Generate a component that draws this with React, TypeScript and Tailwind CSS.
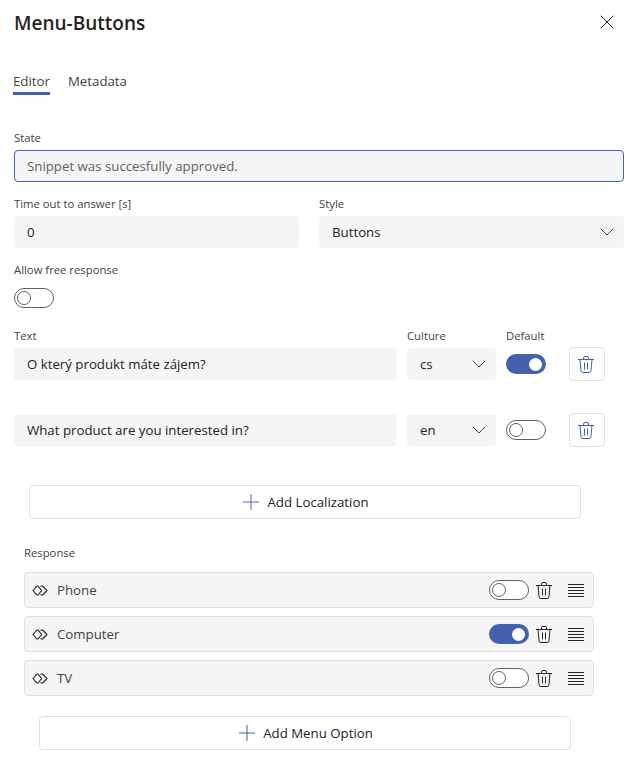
import { ChevronDown, Plus, X } from "lucide-react"

const font = "font-['Open_Sans','Noto_Sans',sans-serif]"

function TrashIcon({ className }: { className: string }) {
  return (
    <svg viewBox="0 0 16 17" fill="none" stroke="currentColor" strokeWidth="1" className={className}>
      <path d="M0 3.5h16" />
      <path d="M5.5 3.5V2a1.5 1.5 0 0 1 1.5-1.5h2A1.5 1.5 0 0 1 10.5 2v1.5" />
      <path d="M2 3.5l1 11a2 2 0 0 0 2 2h6a2 2 0 0 0 2-2l1-11" />
      <path d="M6.5 6.5v7M9.5 6.5v7" />
    </svg>
  )
}

function LinkIcon() {
  return (
    <svg viewBox="0 0 16 11" fill="none" stroke="#242424" strokeWidth="1.1" strokeLinejoin="round" className="h-[11px] w-4">
      <path d="M4.8 1.2 1 5.5l3.800 4.300a.8.8 0 0 0 1.200 0l3.800-4.300L6 1.200a.8.8 0 0 0-1.200 0Z" />
      <path d="M8.500 1.500 9.500 1h1l4.500 4.500L10.500 10h-1l-1-.5" />
    </svg>
  )
}

function DragIcon() {
  return (
    <div className="flex w-4 flex-col gap-[2px]">
      <div className="h-px bg-[#242424]" />
      <div className="h-px bg-[#242424]" />
      <div className="h-px bg-[#242424]" />
      <div className="h-px bg-[#242424]" />
      <div className="h-px bg-[#242424]" />
    </div>
  )
}

function Toggle({ on }: { on?: boolean }) {
  if (on) {
    return (
      <div className="flex h-5 w-10 items-center justify-end rounded-full bg-[#4462ac] px-1">
        <div className="h-[13px] w-[13px] rounded-full bg-white" />
      </div>
    )
  }
  return (
    <div className="flex h-5 w-10 items-center rounded-full border border-[#616161] bg-white px-[2px]">
      <div className="h-[14px] w-[14px] rounded-full border border-[#616161]" />
    </div>
  )
}

function Select({ value, className }: { value: string; className: string }) {
  return (
    <div className={`flex h-8 items-center justify-between rounded bg-[#f5f5f5] pl-[13px] pr-[5px] text-[13.25px] text-[#242424] ${className}`}>
      <span className="pt-[2px]">{value}</span>
      <ChevronDown size={24} strokeWidth={1} className="text-[#424242]" />
    </div>
  )
}

function DeleteButton() {
  return (
    <div className="flex h-[34px] w-9 items-center justify-center rounded border border-[#e0e0e0] bg-white">
      <TrashIcon className="h-[17px] w-4 -translate-x-px text-[#4462ac]" />
    </div>
  )
}

function ResponseRow({ label, on }: { label: string; on?: boolean }) {
  return (
    <div className="flex h-9 items-center rounded border border-[#e0e0e0] bg-[#f5f5f5] pl-[7px] pr-[9px]">
      <LinkIcon />
      <span className="ml-[9px] flex-1 pt-[2px] text-[13.25px] text-[#424242]">{label}</span>
      <Toggle on={on} />
      <TrashIcon className="ml-[7px] h-[17px] w-4 text-[#242424]" />
      <div className="ml-[16px]">
        <DragIcon />
      </div>
    </div>
  )
}

function AddButton({ label, className, plusClass }: { label: string; className: string; plusClass: string }) {
  return (
    <div className={`flex h-[34px] items-center justify-center gap-[3px] rounded border border-[#e0e0e0] bg-white pr-[3px] text-[13.25px] text-[#242424] ${className}`}>
      <Plus size={26} strokeWidth={0.95} className={plusClass} />
      <span className="pt-[2px]">{label}</span>
    </div>
  )
}

export default function App() {
  return (
    <div className={`h-[771px] w-[634px] overflow-hidden bg-white pl-[14px] pr-[10px] pt-[11px] ${font}`}>
      <div className="flex items-center justify-between pr-[5px]">
        <h1 className="text-[19px] leading-[24px] font-semibold text-[#242424]">Menu-Buttons</h1>
        <X size={24} strokeWidth={1} className="-translate-y-px text-[#242424]" />
      </div>

      <div className="mt-[36px] flex gap-[18px] text-[13.25px] text-[#424242]">
        <div className="-ml-px border-b-[3px] border-[#4462ac] pb-[1px] leading-[20px]">Editor</div>
        <div className="leading-[20px]">Metadata</div>
      </div>

      <div className="mt-[35px] text-[11.3px] leading-4 text-[#424242]">State</div>
      <div className="mt-[4px] flex h-8 items-center rounded border border-[#4462ac] bg-[#f5f5f5] pl-3 pt-[1px] text-[13.25px] text-[#616161]">
        Snippet was succesfully approved.
      </div>

      <div className="mt-[14px] flex gap-5">
        <div className="w-[285px]">
          <div className="text-[11.3px] leading-4 text-[#424242]">Time out to answer [s]</div>
          <div className="mt-[4px] flex h-8 items-center rounded bg-[#f5f5f5] pl-[13px] pt-[2px] text-[13.25px] text-[#242424]">0</div>
        </div>
        <div className="flex-1">
          <div className="text-[11.3px] leading-4 text-[#424242]">Style</div>
          <Select value="Buttons" className="mt-[4px]" />
        </div>
      </div>

      <div className="mt-[14px] text-[11.3px] leading-4 text-[#424242]">Allow free response</div>
      <div className="mt-[10px]">
        <Toggle />
      </div>

      <div className="mt-[20px] flex items-end">
        <div className="w-[383px]">
          <div className="text-[11.3px] leading-4 text-[#424242]">Text</div>
          <div className="mt-[4px] flex h-8 items-center rounded bg-[#f5f5f5] pl-[13px] pt-[2px] text-[13.25px] text-[#242424]">O který produkt máte zájem?</div>
        </div>
        <div className="ml-[10px] w-[89px]">
          <div className="text-[11.3px] leading-4 text-[#424242]">Culture</div>
          <Select value="cs" className="mt-[4px]" />
        </div>
        <div className="ml-[10px] w-[40px]">
          <div className="whitespace-nowrap text-[11.3px] leading-4 text-[#424242]">Default</div>
          <div className="mt-[10px] mb-[6px]">
            <Toggle on />
          </div>
        </div>
        <div className="-mb-px ml-[23px]">
          <DeleteButton />
        </div>
      </div>

      <div className="mt-[33px] flex items-center">
        <div className="flex h-8 w-[383px] items-center rounded bg-[#f5f5f5] pl-[13px] pt-[2px] text-[13.25px] text-[#242424]">What product are you interested in?</div>
        <Select value="en" className="ml-[10px] w-[89px]" />
        <div className="ml-[10px]">
          <Toggle />
        </div>
        <div className="ml-[23px]">
          <DeleteButton />
        </div>
      </div>

      <AddButton label="Add Localization" className="ml-[15px] mt-[38px] w-[552px]" plusClass="text-[#6b5fb5]" />

      <div className="ml-[10px] mt-[26px] w-[570px]">
        <div className="text-[11.3px] leading-4 text-[#424242]">Response</div>
        <div className="mt-[11px] flex flex-col gap-2">
          <ResponseRow label="Phone" />
          <ResponseRow label="Computer" on />
          <ResponseRow label="TV" />
        </div>
      </div>

      <AddButton label="Add Menu Option" className="ml-[25px] mt-5 w-[532px]" plusClass="text-[#4462ac]" />
    </div>
  )
}
